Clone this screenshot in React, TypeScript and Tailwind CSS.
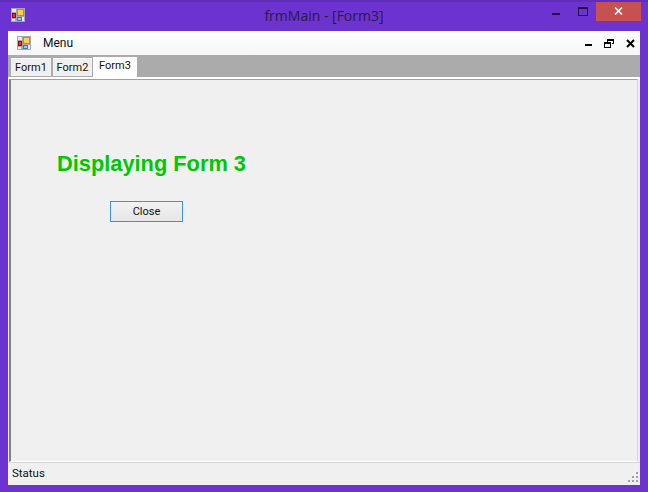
function AppIcon({ className }: { className: string }) {
  return (
    <svg className={className} viewBox="0 0 14 14" shapeRendering="crispEdges">
      <rect x="0" y="0" width="14" height="14" fill="#a8a8a8" />
      <rect x="1" y="1" width="4" height="3" fill="#e8e8e8" />
      <rect x="1" y="11" width="3" height="2" fill="#e8e8e8" />
      <rect x="11" y="9" width="2" height="4" fill="#e8e8e8" />
      <rect x="6" y="1" width="7" height="7" fill="#c88a10" />
      <rect x="7" y="2" width="5" height="5" fill="#fdd050" />
      <rect x="1" y="5" width="4" height="5" fill="#8a1010" />
      <rect x="2" y="6" width="2" height="3" fill="#e83030" />
      <rect x="6" y="9" width="5" height="4" fill="#3f74c8" />
      <rect x="7" y="10" width="3" height="2" fill="#a0c4f0" />
    </svg>
  );
}

export default function App() {
  return (
    <div className="w-[648px] h-[492px] bg-[#6c33d0] border-t-2 border-[#5f2db8] flex flex-col overflow-hidden font-['Liberation_Sans',sans-serif] text-[12px] text-black">
      <div className="h-[29px] flex items-start relative shrink-0">
        <AppIcon className="absolute left-[11px] top-[6px] w-[14px] h-[14px]" />
        <div className="w-full text-center text-[14px] leading-[28px] text-[#2a1a48] font-['Open_Sans',sans-serif]">frmMain - [Form3]</div>
        <div className="absolute right-[7px] top-[-1px] flex items-start">
          <div className="w-[45px] h-[21px] relative">
            <div className="absolute left-[29px] top-[12px] w-[8px] h-[2px] bg-[#1f1238]" />
          </div>
          <div className="w-[28px] h-[21px] relative">
            <div className="absolute left-[10px] top-[6px] w-[10px] h-[9px] border border-t-2 border-[#1f1238]" />
          </div>
          <div className="w-[45px] h-[20px] bg-[#c75050] flex items-center justify-center">
            <svg width="9" height="8" viewBox="0 0 9 8"><path d="M1 0.5 L8 7.5 M8 0.5 L1 7.5" stroke="#fff" strokeWidth="1.6" /></svg>
          </div>
        </div>
      </div>

      <div className="mx-[8px] w-[632px] h-[454px] flex flex-col bg-[#f0f0f0] shrink-0">
        <div className="h-[24px] shrink-0 bg-gradient-to-b from-[#ffffff] to-[#f6f6f6] flex items-center relative">
          <AppIcon className="ml-[9px] w-[14px] h-[14px]" />
          <span className="ml-[12px] text-[12px] text-[#101010] font-['Roboto',sans-serif]">Menu</span>
          <div className="ml-auto flex items-center mr-[5px]">
            <div className="w-[7px] h-[2px] bg-black mt-[4px] mr-[12px]" />
            <svg className="mr-[12px]" width="10" height="9" viewBox="0 0 10 9" shapeRendering="crispEdges">
              <path d="M3.5 2.5 V0.5 H9.5 V4.5 H7.5" fill="none" stroke="#000" />
              <rect x="0.5" y="3.5" width="6" height="5" fill="none" stroke="#000" />
              <rect x="0" y="3" width="7" height="2" fill="#000" />
              <rect x="3" y="0" width="7" height="1.5" fill="#000" />
            </svg>
            <svg width="9" height="9" viewBox="0 0 9 9"><path d="M1 1 L8 8 M8 1 L1 8" stroke="#000" strokeWidth="2" /></svg>
          </div>
        </div>

        <div className="h-[22px] shrink-0 bg-[#ababab] flex items-end pl-[3px]">
          <div className="w-[40px] h-[18px] mb-[1px] pt-[1px] bg-[#f0f0f0] border-t border-[#ffffff] flex items-center justify-center text-[11px] text-[#101010] font-['Roboto',sans-serif]">Form1</div>
          <div className="w-[39px] h-[18px] mb-[1px] ml-[2px] pt-[1px] bg-[#f0f0f0] border-t border-[#ffffff] flex items-center justify-center text-[11px] text-[#101010] font-['Roboto',sans-serif]">Form2</div>
          <div className="w-[44px] h-[20px] ml-[1px] bg-white flex items-start justify-center pt-[2px] text-[11px] leading-[14px] text-[#101010] font-['Roboto',sans-serif]">Form3</div>
        </div>

        <div className="h-[2px] shrink-0 bg-white" />

        <div className="h-[383px] shrink-0 ml-[1px] mr-[2px] border-t border-[#a0a0a0] border-l-2 border-r border-b border-l-[#808080] border-r-[#d8d8d8] border-b-[#ffffff] bg-[#f0f0f0] pl-[46px] pt-[70px]">
          <div className="text-[21.8px] leading-[28px] font-bold text-[#00c800]">Displaying Form 3</div>
          <button className="block mt-[23px] ml-[53px] w-[73px] h-[21px] border border-[#3c8ff0] bg-gradient-to-b from-[#f2f2f2] to-[#e6e6e6] text-[11px] leading-[18px] text-[#101010] font-['Roboto',sans-serif]">Close</button>
        </div>

        <div className="flex-1 border-t border-[#d8d8d8] flex items-center pl-[4px] relative">
          <span className="text-[11.5px] text-[#101010] font-['Roboto',sans-serif]">Status</span>
          <svg className="absolute right-[2px] bottom-[3px]" width="10" height="10" viewBox="0 0 10 10" fill="#a0a0a0" shapeRendering="crispEdges">
            <rect x="8" y="0" width="2" height="2" />
            <rect x="4" y="4" width="2" height="2" />
            <rect x="8" y="4" width="2" height="2" />
            <rect x="0" y="8" width="2" height="2" />
            <rect x="4" y="8" width="2" height="2" />
            <rect x="8" y="8" width="2" height="2" />
          </svg>
        </div>
      </div>
    </div>
  );
}
